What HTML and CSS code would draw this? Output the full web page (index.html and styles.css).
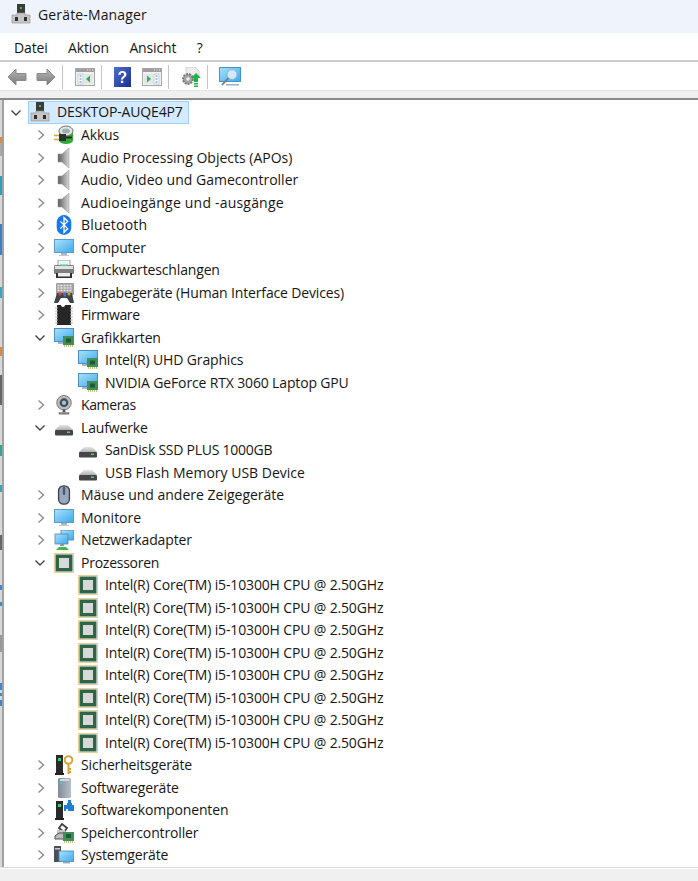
FILE: index.html
```html
<!DOCTYPE html>
<html lang="de">
<head>
<meta charset="utf-8">
<title>Geräte-Manager</title>
<link rel="stylesheet" href="styles.css">
</head>
<body>
<svg class="defs" width="0" height="0" aria-hidden="true">
  <defs>
    <linearGradient id="gScreen" x1="0" y1="0" x2="1" y2="1"><stop offset="0" stop-color="#a8e2fb"/><stop offset="1" stop-color="#3fa9ea"/></linearGradient>
    <linearGradient id="gSpk" x1="0" y1="0" x2="1" y2="0"><stop offset="0" stop-color="#5f5f5f"/><stop offset=".4" stop-color="#8c8c8c"/><stop offset="1" stop-color="#d8d8d8"/></linearGradient>
    <linearGradient id="gArrow" x1="0" y1="0" x2="0" y2="1"><stop offset="0" stop-color="#b8b8b8"/><stop offset="1" stop-color="#787878"/></linearGradient>
    <linearGradient id="gHelp" x1="0" y1="0" x2="1" y2="1"><stop offset="0" stop-color="#4f6fd0"/><stop offset="1" stop-color="#1c2f8c"/></linearGradient>
    <linearGradient id="gTower" x1="0" y1="0" x2="1" y2="0"><stop offset="0" stop-color="#7f8b97"/><stop offset="1" stop-color="#b8c1ca"/></linearGradient>
    <linearGradient id="gDisk" x1="0" y1="0" x2="0" y2="1"><stop offset="0" stop-color="#e6e6e6"/><stop offset="1" stop-color="#b0b0b0"/></linearGradient>
    <symbol id="c-closed" viewBox="0 0 16 16"><path d="M5.500 3.500 10.500 8 5.500 12.500" fill="none" stroke="#8c8c8c" stroke-width="1.400"/></symbol>
    <symbol id="c-open" viewBox="0 0 16 16"><path d="M2.500 5.500 7 10 11.500 5.500" fill="none" stroke="#444" stroke-width="1.400"/></symbol>

    <symbol id="i-pc" viewBox="0 0 20 20"><rect x="6" y="0" width="8" height="11" fill="#3b3b3b"/><rect x="9" y="3" width="2" height="2" fill="#45b85a"/><path d="M6 9h8v2h5v8H1v-8h5z" fill="#c6c6c6" stroke="#8a8a8a" stroke-width=".6"/><rect x="4" y="13" width="3" height="4" fill="#2f2f2f"/><rect x="13" y="13" width="3" height="4" fill="#2f2f2f"/></symbol>

    <symbol id="i-batt" viewBox="0 0 20 20"><path d="M5 7h14v9c-2 4-12 4-14 0z" fill="#35a83a"/><ellipse cx="12" cy="6" rx="7" ry="5" fill="#dfe5e6" stroke="#6f6f6f"/><ellipse cx="12" cy="6" rx="4" ry="2.500" fill="#9fb0b0"/><path d="M5 9h7v7H5z" fill="#2a342e"/><path d="M0 10.500h5M0 14.500h5" stroke="#c9a94a" stroke-width="1.500"/><path d="M12 12.500h6" stroke="#222" stroke-width="1.800"/></symbol>

    <symbol id="i-spk" viewBox="0 0 20 20"><path d="M4 6h4l7-6v20l-7-6H4z" fill="url(#gSpk)" stroke="#8f8f8f" stroke-width=".5"/></symbol>

    <symbol id="i-bt" viewBox="0 0 20 22"><rect x="2" y="0" width="16" height="22" rx="8" fill="#1678ee"/><path d="M6 7l8 8-4 4V3l4 4-8 8" fill="none" stroke="#fff" stroke-width="1.500"/></symbol>

    <symbol id="i-mon" viewBox="0 0 20 20"><rect x=".5" y="1.500" width="19" height="13" fill="url(#gScreen)" stroke="#5d9cc9"/><rect x="7" y="15" width="6" height="2" fill="#a9b7c4"/><rect x="5" y="17" width="10" height="1" fill="#c5ced6"/></symbol>

    <symbol id="i-print" viewBox="0 0 20 20"><rect x="4" y="0" width="12" height="6" fill="#f2f2f2" stroke="#8a8a8a" stroke-width=".8"/><rect x="0" y="5" width="20" height="9" rx="1.500" fill="#7f7f7f"/><rect x="1" y="6" width="18" height="3" fill="#e2e2e2"/><rect x="6" y="4.500" width="8" height="1.500" fill="#3fd08a"/><rect x="2" y="13" width="16" height="5" fill="#2e2e2e"/><rect x="4" y="13" width="12" height="3.500" fill="#ececec"/></symbol>

    <symbol id="i-input" viewBox="0 0 20 20"><rect x="2" y="0" width="18" height="12" rx="1" fill="#9f9f9f"/><path d="M3.500 2.500h15M3.500 5h15M3.500 7.500h15" stroke="#eeeeee" stroke-width="1.300" stroke-dasharray="2 1"/><path d="M0 20 3 10h7l1 4 1-4h6l2 10h-4l-3-5H7l-3 5z" fill="#3f444c"/><circle cx="6" cy="11" r="1.800" fill="#d04040"/><circle cx="10.500" cy="11" r="1.800" fill="#3f6fd0"/><circle cx="15" cy="11" r="1.500" fill="#d0a030"/></symbol>

    <symbol id="i-fw" viewBox="0 0 20 20"><path d="M3 0h4a2 2 0 0 0 4 0h6v20H3z" fill="#262626"/><path d="M1 3h3M1 6h3M1 9h3M1 12h3M1 15h3M1 18h3M16 3h3M16 6h3M16 9h3M16 12h3M16 15h3M16 18h3" stroke="#b5b5b5" stroke-width="1.100"/></symbol>

    <symbol id="i-gpu" viewBox="0 0 20 20"><rect x=".5" y=".5" width="19" height="13" fill="url(#gScreen)" stroke="#4f90c2"/><rect x="4" y="14" width="5" height="2" fill="#a9b7c4"/><rect x="9" y="8" width="11" height="9" fill="#3f8f58"/><rect x="12" y="10.500" width="5" height="4" fill="#1f5a38"/><path d="M10 18h9" stroke="#c9a94a" stroke-width="1.500" stroke-dasharray="1 1"/></symbol>

    <symbol id="i-cam" viewBox="0 0 20 22"><circle cx="10" cy="8.500" r="8" fill="#b8bcc0" stroke="#666" stroke-width=".9"/><circle cx="10" cy="8.500" r="4.800" fill="#454b51"/><circle cx="10" cy="8.500" r="2.400" fill="#9cc3dd"/><rect x="8.500" y="16" width="3" height="3" fill="#555"/><rect x="4" y="19" width="12" height="2.500" rx="1" fill="#7d7d7d"/></symbol>

    <symbol id="i-disk" viewBox="0 0 20 20"><path d="M6 7h8l5 5H1z" fill="url(#gDisk)"/><rect x="1" y="12" width="18" height="5.500" rx="1" fill="#454545"/><rect x="13" y="13.500" width="3" height="1.500" fill="#4ed060"/></symbol>

    <symbol id="i-mouse" viewBox="0 0 20 24"><rect x="3.500" y="1" width="13" height="22" rx="6" fill="#98a8bf" stroke="#39424f" stroke-width="1.600"/><rect x="8.500" y="2" width="3" height="10" rx="1.500" fill="#4e5b6c"/></symbol>

    <symbol id="i-net" viewBox="0 0 20 20"><rect x="7" y="0" width="13" height="10" fill="url(#gScreen)" stroke="#4b87ba" stroke-width=".8"/><rect x="1" y="4" width="13" height="10" fill="url(#gScreen)" stroke="#4b87ba" stroke-width=".8"/><rect x="6" y="14" width="4" height="2" fill="#8a9aa5"/><path d="M2 20l3-3h7l3 3z" fill="#46b54a"/></symbol>

    <symbol id="i-cpu" viewBox="0 0 20 20"><rect x=".5" y=".5" width="19" height="19" fill="none" stroke="#d0a030" stroke-dasharray="1 1"/><rect x="1.500" y="1.500" width="17" height="17" fill="#2f6447"/><rect x="5" y="5" width="10" height="10" fill="#d7d9d9"/></symbol>

    <symbol id="i-sec" viewBox="0 0 20 20"><path d="M1 18h9v2H1z" fill="#222"/><rect x="2" y="0" width="7" height="18" fill="#2a2a2a"/><rect x="4" y="3" width="3" height="3" fill="#35d070"/><circle cx="14.500" cy="5" r="3.800" fill="none" stroke="#d6a436" stroke-width="2"/><path d="M14.500 9v10M14.500 14h2.500M14.500 17h2.500" stroke="#d6a436" stroke-width="2"/></symbol>

    <symbol id="i-sdev" viewBox="0 0 20 20"><rect x="4" y="0" width="13" height="20" rx="1.500" fill="url(#gTower)"/><rect x="6" y="1" width="9" height="2" fill="#d5dbe0"/><rect x="6" y="4" width="2" height="2" fill="#39d0e6"/></symbol>

    <symbol id="i-comp" viewBox="0 0 20 20"><path d="M1 18h9v2H1z" fill="#222"/><rect x="2" y="1" width="7" height="17" fill="#2a2a2a"/><rect x="4" y="4" width="3" height="3" fill="#35d070"/><path d="M10 5h3V3h1V0h3v3h1v2h2v6h-6V9h-2v2h-2z" fill="#1f7fd0"/></symbol>

    <symbol id="i-stor" viewBox="0 0 20 20"><path d="M5 5l3-4 5 4-3 4z" fill="none" stroke="#444" stroke-width="1.800"/><path d="M3 7h8v4H3z" fill="#c6c6c6"/><path d="M1 13l4-3h5v6H1z" fill="#bcbcbc" stroke="#444" stroke-width=".9"/><rect x="9" y="9" width="11" height="9" fill="#3f8f58"/><rect x="12" y="11" width="5" height="4" fill="#1f5a38"/><path d="M10 19h9" stroke="#c9a94a" stroke-width="1.500" stroke-dasharray="1 1"/></symbol>

    <symbol id="i-sys" viewBox="0 0 20 20"><rect x="0" y="1" width="7" height="16" fill="#4a4f55"/><rect x="1" y="3" width="5" height="1.500" fill="#c8c8c8"/><rect x="5" y="6" width="15" height="10.500" fill="url(#gScreen)" stroke="#4b87ba" stroke-width=".8"/><rect x="9" y="17" width="7" height="1.500" fill="#9db0be"/></symbol>

    <symbol id="t-back" viewBox="0 0 20 18"><path d="M9 1v4.500h10v7H9V17L1 9z" fill="url(#gArrow)" stroke="#8a8a8a"/></symbol>
    <symbol id="t-fwd" viewBox="0 0 20 18"><path d="M11 1v4.500H1v7h10V17l8-8z" fill="url(#gArrow)" stroke="#8a8a8a"/></symbol>
    <symbol id="t-pane-l" viewBox="0 0 20 18"><rect x=".5" y=".5" width="19" height="17" fill="#f2f2f2" stroke="#a6a6a6"/><rect x="1" y="1" width="18" height="3" fill="#9e9e9e"/><path d="M12 2h1M14.500 2h1M17 2h1" stroke="#eee"/><rect x="3" y="6" width="5" height="10" fill="#fff" stroke="#a9bccd" stroke-width=".7"/><path d="M4.500 8h2M4.500 11h2M4.500 14h2" stroke="#4a84bd"/><rect x="9" y="6" width="9" height="10" fill="#e4e7ea"/><path d="M15 7.500v7l-4-3.500z" fill="#2fb24a"/></symbol>
    <symbol id="t-pane-r" viewBox="0 0 20 18"><rect x=".5" y=".5" width="19" height="17" fill="#f2f2f2" stroke="#a6a6a6"/><rect x="1" y="1" width="18" height="3" fill="#9e9e9e"/><path d="M12 2h1M14.500 2h1M17 2h1" stroke="#eee"/><rect x="12" y="6" width="5" height="10" fill="#fff" stroke="#a9bccd" stroke-width=".7"/><path d="M13.500 8h2M13.500 11h2M13.500 14h2" stroke="#4a84bd"/><rect x="2" y="6" width="9" height="10" fill="#e4e7ea"/><path d="M5 7.500v7l4-3.500z" fill="#2fb24a"/></symbol>
    <symbol id="t-help" viewBox="0 0 17 20"><rect width="17" height="20" fill="url(#gHelp)"/><text x="8.500" y="16" class="help-mark">?</text></symbol>
    <symbol id="t-gear" viewBox="0 0 20 20"><path d="M5 0h9l4 4v6H5z" fill="#eee" stroke="#c2c2c2" stroke-width=".8"/><circle cx="7" cy="12" r="5" fill="#a5a5a5" stroke="#777" stroke-width="1.800" stroke-dasharray="2 1"/><circle cx="7" cy="12" r="1.800" fill="#eee"/><path d="M15 6l5 5h-3v4h-4v-4h-3z" fill="#1fb24a"/><path d="M13 16h4v1.500h-4zM13 18.500h4V20h-4z" fill="#1fb24a"/></symbol>
    <symbol id="t-scan" viewBox="0 0 22 20"><rect x=".5" y=".5" width="21" height="14" fill="url(#gScreen)" stroke="#3f92d0"/><circle cx="13" cy="7.500" r="5" fill="#cfeafa" stroke="#8fb6cc"/><path d="M9.500 11 3 18" stroke="#777" stroke-width="1.800"/><rect x="7" y="17" width="13" height="1.500" fill="#9cb0bf"/></symbol>
  </defs>
</svg>

<header class="titlebar">
  <svg class="title-icon"><use href="#i-pc"/></svg>
  <span>Geräte-Manager</span>
</header>

<nav class="menubar">
  <span>Datei</span>
  <span>Aktion</span>
  <span>Ansicht</span>
  <span>?</span>
</nav>

<div class="toolbar">
  <button class="tool"><svg class="t20"><use href="#t-back"/></svg></button>
  <button class="tool"><svg class="t20"><use href="#t-fwd"/></svg></button>
  <i class="sep"></i>
  <button class="tool"><svg class="t20"><use href="#t-pane-l"/></svg></button>
  <i class="sep snug"></i>
  <button class="tool"><svg class="thelp"><use href="#t-help"/></svg></button>
  <button class="tool"><svg class="t20"><use href="#t-pane-r"/></svg></button>
  <i class="sep"></i>
  <button class="tool"><svg class="t20 tall"><use href="#t-gear"/></svg></button>
  <i class="sep"></i>
  <button class="tool"><svg class="t22"><use href="#t-scan"/></svg></button>
</div>
<div class="toolbar-foot"></div>

<main class="pane">
  <div class="edge"></div>
  <ul class="tree">
    <li class="row d0"><svg class="chev"><use href="#c-open"/></svg><span class="sel"><svg class="ico"><use href="#i-pc"/></svg><span class="label">DESKTOP-AUQE4P7</span></span></li>
    <li class="row d1"><svg class="chev"><use href="#c-closed"/></svg><svg class="ico"><use href="#i-batt"/></svg><span class="label">Akkus</span></li>
    <li class="row d1"><svg class="chev"><use href="#c-closed"/></svg><svg class="ico"><use href="#i-spk"/></svg><span class="label norm">Audio Processing Objects (APOs)</span></li>
    <li class="row d1"><svg class="chev"><use href="#c-closed"/></svg><svg class="ico"><use href="#i-spk"/></svg><span class="label norm">Audio, Video und Gamecontroller</span></li>
    <li class="row d1"><svg class="chev"><use href="#c-closed"/></svg><svg class="ico"><use href="#i-spk"/></svg><span class="label wide">Audioeingänge und -ausgänge</span></li>
    <li class="row d1"><svg class="chev"><use href="#c-closed"/></svg><svg class="ico"><use href="#i-bt"/></svg><span class="label wide">Bluetooth</span></li>
    <li class="row d1"><svg class="chev"><use href="#c-closed"/></svg><svg class="ico"><use href="#i-mon"/></svg><span class="label">Computer</span></li>
    <li class="row d1"><svg class="chev"><use href="#c-closed"/></svg><svg class="ico"><use href="#i-print"/></svg><span class="label">Druckwarteschlangen</span></li>
    <li class="row d1"><svg class="chev"><use href="#c-closed"/></svg><svg class="ico"><use href="#i-input"/></svg><span class="label">Eingabegeräte (Human Interface Devices)</span></li>
    <li class="row d1"><svg class="chev"><use href="#c-closed"/></svg><svg class="ico"><use href="#i-fw"/></svg><span class="label tight">Firmware</span></li>
    <li class="row d1"><svg class="chev"><use href="#c-open"/></svg><svg class="ico"><use href="#i-gpu"/></svg><span class="label">Grafikkarten</span></li>
    <li class="row d2"><svg class="ico"><use href="#i-gpu"/></svg><span class="label">Intel(R) UHD Graphics</span></li>
    <li class="row d2"><svg class="ico"><use href="#i-gpu"/></svg><span class="label">NVIDIA GeForce RTX 3060 Laptop GPU</span></li>
    <li class="row d1"><svg class="chev"><use href="#c-closed"/></svg><svg class="ico"><use href="#i-cam"/></svg><span class="label tight">Kameras</span></li>
    <li class="row d1"><svg class="chev"><use href="#c-open"/></svg><svg class="ico"><use href="#i-disk"/></svg><span class="label">Laufwerke</span></li>
    <li class="row d2"><svg class="ico"><use href="#i-disk"/></svg><span class="label snug-text">SanDisk SSD PLUS 1000GB</span></li>
    <li class="row d2"><svg class="ico"><use href="#i-disk"/></svg><span class="label norm">USB Flash Memory USB Device</span></li>
    <li class="row d1"><svg class="chev"><use href="#c-closed"/></svg><svg class="ico"><use href="#i-mouse"/></svg><span class="label norm">Mäuse und andere Zeigegeräte</span></li>
    <li class="row d1"><svg class="chev"><use href="#c-closed"/></svg><svg class="ico"><use href="#i-mon"/></svg><span class="label norm">Monitore</span></li>
    <li class="row d1"><svg class="chev"><use href="#c-closed"/></svg><svg class="ico"><use href="#i-net"/></svg><span class="label">Netzwerkadapter</span></li>
    <li class="row d1"><svg class="chev"><use href="#c-open"/></svg><svg class="ico"><use href="#i-cpu"/></svg><span class="label snug-text">Prozessoren</span></li>
    <li class="row d2"><svg class="ico"><use href="#i-cpu"/></svg><span class="label">Intel(R) Core(TM) i5-10300H CPU @ 2.50GHz</span></li>
    <li class="row d2"><svg class="ico"><use href="#i-cpu"/></svg><span class="label">Intel(R) Core(TM) i5-10300H CPU @ 2.50GHz</span></li>
    <li class="row d2"><svg class="ico"><use href="#i-cpu"/></svg><span class="label">Intel(R) Core(TM) i5-10300H CPU @ 2.50GHz</span></li>
    <li class="row d2"><svg class="ico"><use href="#i-cpu"/></svg><span class="label">Intel(R) Core(TM) i5-10300H CPU @ 2.50GHz</span></li>
    <li class="row d2"><svg class="ico"><use href="#i-cpu"/></svg><span class="label">Intel(R) Core(TM) i5-10300H CPU @ 2.50GHz</span></li>
    <li class="row d2"><svg class="ico"><use href="#i-cpu"/></svg><span class="label">Intel(R) Core(TM) i5-10300H CPU @ 2.50GHz</span></li>
    <li class="row d2"><svg class="ico"><use href="#i-cpu"/></svg><span class="label">Intel(R) Core(TM) i5-10300H CPU @ 2.50GHz</span></li>
    <li class="row d2"><svg class="ico"><use href="#i-cpu"/></svg><span class="label">Intel(R) Core(TM) i5-10300H CPU @ 2.50GHz</span></li>
    <li class="row d1"><svg class="chev"><use href="#c-closed"/></svg><svg class="ico"><use href="#i-sec"/></svg><span class="label">Sicherheitsgeräte</span></li>
    <li class="row d1"><svg class="chev"><use href="#c-closed"/></svg><svg class="ico"><use href="#i-sdev"/></svg><span class="label">Softwaregeräte</span></li>
    <li class="row d1"><svg class="chev"><use href="#c-closed"/></svg><svg class="ico"><use href="#i-comp"/></svg><span class="label">Softwarekomponenten</span></li>
    <li class="row d1"><svg class="chev"><use href="#c-closed"/></svg><svg class="ico"><use href="#i-stor"/></svg><span class="label">Speichercontroller</span></li>
    <li class="row d1"><svg class="chev"><use href="#c-closed"/></svg><svg class="ico"><use href="#i-sys"/></svg><span class="label">Systemgeräte</span></li>
  </ul>
</main>
<footer class="statusbar"></footer>
</body>
</html>
```
FILE: styles.css
```css
* { box-sizing: border-box; }
html, body { height: 100%; }
body {
  margin: 0;
  display: flex;
  flex-direction: column;
  overflow: hidden;
  background: #fff;
  color: #161616;
  font-family: "Open Sans", "Noto Sans", sans-serif;
  font-size: 14px;
}
.defs { position: absolute; }
.help-mark { font: bold 16px "Liberation Sans", sans-serif; fill: #fff; text-anchor: middle; }

.titlebar {
  flex: 0 0 33px;
  display: flex;
  align-items: center;
  background: #eff3fb;
  padding: 0 0 5px 11px;
  letter-spacing: .15px;
}
.title-icon { width: 20px; height: 20px; margin-right: 7px; }

.menubar {
  flex: 0 0 29px;
  display: flex;
  align-items: center;
  gap: 20.5px;
  padding: 1px 0 0 14px;
  letter-spacing: -.15px;
  border-bottom: 2px solid #cccccc;
}

.toolbar {
  flex: 0 0 28px;
  display: flex;
  align-items: center;
  padding: 2px 0 0 2px;
}
.tool {
  width: 29px;
  height: 26px;
  padding: 0;
  border: 0;
  background: none;
  display: flex;
  align-items: center;
  justify-content: center;
}
.tool svg { filter: blur(.3px); }
.sep { width: 1px; height: 24px; background: #c4c4c4; margin: 0 7px 0 2px; }
.sep.snug { margin-right: 6px; }
.t20 { width: 20px; height: 18px; }
.t20.tall { height: 20px; }
.t22 { width: 22px; height: 20px; }
.thelp { width: 17px; height: 20px; }

.toolbar-foot {
  flex: 0 0 10px;
  background: #f0f0f0;
  border-top: 1px solid #e4e4e4;
  border-bottom: 2px solid #8a8a8a;
}

.pane { flex: 1 1 auto; display: flex; min-height: 0; }
.edge {
  flex: 0 0 2px;
  background: linear-gradient(to bottom,
    #d8d8d8 0 37px, #d98a3c 37px 43px, #a8a8a8 43px 56px, #d8d8d8 56px 76px,
    #2aa0b8 76px 95px, #d8d8d8 95px 124px, #3a7fd0 124px 155px, #d8d8d8 155px 187px,
    #30a8c8 187px 198px, #d8d8d8 198px 247px, #d98a3c 247px 256px, #d8d8d8 256px 275px,
    #666 275px 305px, #d8d8d8 305px 345px, #2aa890 345px 356px, #d8d8d8 356px 385px,
    #30a8b8 385px 392px, #d8d8d8 392px 435px, #666 435px 450px, #d8d8d8 450px 485px,
    #3a88d0 485px 490px, #d8d8d8 490px 502px, #3a88d0 502px 506px, #d8d8d8 506px 535px,
    #999 535px 552px, #d8d8d8 552px 583px, #3a88d0 583px 590px, #d8d8d8 590px 593px,
    #3a88d0 593px 596px, #d8d8d8 596px 600px, #3a88d0 600px 606px, #d8d8d8 606px);
}
.tree {
  flex: 1 1 auto;
  list-style: none;
  margin: 0;
  padding: 1.5px 0 0;
  border-left: 2px solid #a2a2a2;
}
.row {
  height: 22.5px;
  display: flex;
  align-items: center;
  white-space: nowrap;
}
.d0 { padding-left: 5px; }
.d1 { padding-left: 29px; }
.d2 { padding-left: 74px; }
.chev { width: 16px; height: 16px; flex: none; margin-right: 5px; }
.d0 .chev { margin-right: 3px; }
.ico { width: 20px; height: 20px; flex: none; margin-right: 7px; filter: blur(.3px); }
.sel {
  height: 23px;
  display: flex;
  align-items: center;
  padding: 0 5px 0 1px;
  margin-top: -1px;
  background: #d4eaff;
  border: 1px solid #9fd0fb;
}
.label { line-height: 1; letter-spacing: -.15px; }
.label.norm { letter-spacing: 0; }
.label.wide { letter-spacing: .2px; }
.label.snug-text { letter-spacing: -.25px; }
.label.tight { letter-spacing: -.38px; }

.statusbar {
  flex: 0 0 14px;
  background: #f0f0f0;
  border-top: 1px solid #dcdcdc;
  box-shadow: inset 0 1px 0 #fff;
}
```
